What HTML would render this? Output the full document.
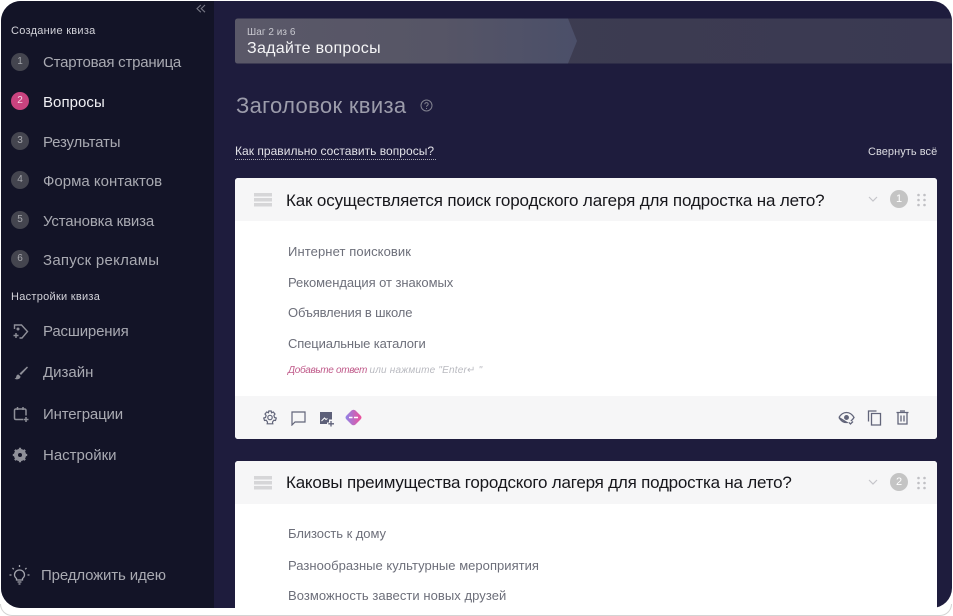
<!DOCTYPE html>
<html lang="ru"><head><meta charset="utf-8"><style>
html,body{margin:0;padding:0;width:953px;height:616px;overflow:hidden;background:#fff}
body{font-family:"Liberation Sans","DejaVu Sans",sans-serif;position:relative}
.t{position:absolute;white-space:nowrap;line-height:1}
.a{position:absolute}
.ln{position:absolute;left:0;top:604px;height:12px;border:1px solid #d4d4d4;border-top:0;box-sizing:border-box;border-radius:0 0 20px 20px;width:952px}
#f{position:absolute;left:1px;top:1px;width:951px;height:607px;background:#1e1c3d;border-radius:20px;overflow:hidden}
.sh{font-size:11px;color:#d3d3da;letter-spacing:.28px;left:11px}
.n{position:absolute;left:11px;width:18px;height:18px;border-radius:50%;background:#44454f;color:#a6a7ad;font-size:10px;line-height:18px;text-align:center}
.m{font-size:15px;color:#a9aab2;left:43px}
.card{position:absolute;left:235px;width:702px;background:#fff;border-radius:3px;overflow:hidden}
.hd{position:absolute;left:0;top:0;width:702px;height:43px;background:#f6f6f7}
.q{font-size:17px;color:#17171c;left:51px;top:14px}
.o{font-size:13px;color:#6d6f7a;left:53px}
.b{position:absolute;left:655px;top:12px;width:18px;height:18px;border-radius:50%;background:#c4c4c4;color:#fff;font-size:11px;line-height:18px;text-align:center}
</style></head><body>
<div class="ln"></div>
<div id="f"></div>
<div class="a" style="left:1px;top:1px;width:213px;height:607px;background:#131427;border-radius:20px 0 0 20px"></div>

<svg class="a" style="left:196px;top:4px" width="10" height="10" viewBox="0 0 10 10" fill="none" stroke="#777885" stroke-width="1.1"><path d="M4.8 1 1 4.6 4.8 8.2M9 1 5.200 4.600 9 8.200"/></svg>
<div class="t sh" style="top:26px">Создание квиза</div>
<div class="n" style="top:53px">1</div><div class="t m" style="top:55px;letter-spacing:-.22px">Стартовая страница</div>
<div class="n" style="top:92px;background:#c9437f;color:#f2d4e3">2</div><div class="t m" style="top:95px;color:#f0f0f4;letter-spacing:.05px">Вопросы</div>
<div class="n" style="top:132px">3</div><div class="t m" style="top:135px;letter-spacing:-.17px">Результаты</div>
<div class="n" style="top:171px">4</div><div class="t m" style="top:174px">Форма контактов</div>
<div class="n" style="top:211px">5</div><div class="t m" style="top:214px;letter-spacing:-.14px">Установка квиза</div>
<div class="n" style="top:250px">6</div><div class="t m" style="top:253px;letter-spacing:.26px">Запуск рекламы</div>
<div class="t sh" style="top:292px">Настройки квиза</div>
<svg class="a" style="left:12px;top:323px" width="18" height="18" viewBox="0 0 18 18" fill="none" stroke="#8e8f98" stroke-width="1.4"><path d="M2.500 6V2H9.500L15.500 8.500 10 15H7.500"/><path d="M4 10V15M1.500 12.500H6.500"/><circle cx="6" cy="6" r=".8"/></svg>
<div class="t m" style="top:324px;letter-spacing:-.17px">Расширения</div>
<svg class="a" style="left:13px;top:365px" width="16" height="16" viewBox="0 0 16 16" fill="#8e8f98"><path d="M14 1.500 15 2.500 8 10 6.500 8.500Z"/><path d="M5.500 9.500C3.500 9.500 3.500 11 3 12.500 2.700 13.300 2 13.500 1.500 13.500 3 15 7.500 14.500 7.500 11.500Z"/></svg>
<div class="t m" style="top:365px">Дизайн</div>
<svg class="a" style="left:13px;top:406px" width="17" height="17" viewBox="0 0 17 17" fill="none" stroke="#8e8f98" stroke-width="1.5"><path d="M10 13.500H3Q1.500 13.500 1.500 12V4.500Q1.500 3 3 3H11.500Q13 3 13 4.500V9.500"/><path d="M4.500 1V4M10 1V4M13 11V16M10.500 13.500H15.500"/></svg>
<div class="t m" style="top:407px;letter-spacing:-.17px">Интеграции</div>
<svg class="a" style="left:12px;top:447px" width="16" height="16" viewBox="0 0 16 16"><circle cx="8" cy="8" r="4.500" fill="none" stroke="#8e8f98" stroke-width="3.200"/><path d="M8 .8V15.200M.8 8H15.200M2.900 2.900 13.100 13.100M13.100 2.900 2.900 13.100" stroke="#8e8f98" stroke-width="2.200"/><circle cx="8" cy="8" r="2" fill="#131427"/></svg>
<div class="t m" style="top:448px">Настройки</div>
<svg class="a" style="left:9px;top:564px" width="21" height="22" viewBox="0 0 21 22" fill="none" stroke="#a3a4ad" stroke-width="1.300"><path d="M7.500 14.500C6 13.300 5.500 12 5.500 10.800 5.500 8 7.700 6 10.500 6S15.500 8 15.500 10.800C15.500 12 15 13.300 13.500 14.500V16H7.500Z"/><path d="M8.500 18H12.500M9.500 20H11.500M10.500 1V3M3.500 4 4.800 5.300M17.500 4 16.200 5.300M.5 11H2.500M18.500 11H20.500"/></svg>
<div class="t m" style="top:568px;left:41px;letter-spacing:-.14px">Предложить идею</div>

<svg class="a" style="left:235px;top:18px" width="718" height="46" viewBox="0 0 718 46"><defs><linearGradient id="g1" x1="0" x2="1"><stop offset="0" stop-color="#5a5868"/><stop offset=".6" stop-color="#565566"/><stop offset="1" stop-color="#4b4f69"/></linearGradient><linearGradient id="g2" x1="0" x2="1"><stop offset="0" stop-color="#3f3e50"/><stop offset="1" stop-color="#3a3952"/></linearGradient></defs><path d="M3 .5H717V45.500H3Q0 45.500 0 42.500V3.500Q0 .5 3 .5Z" fill="url(#g2)"/><path d="M3 .5H333L342 23 333 45.500H3Q0 45.500 0 42.500V3.500Q0 .5 3 .5Z" fill="url(#g1)"/></svg>
<div class="t" style="left:247px;top:28px;font-size:10px;color:#c9c9d0;letter-spacing:.05px">Шаг 2 из 6</div>
<div class="t" style="left:247px;top:41px;font-size:16px;color:#f4f4f6;letter-spacing:.3px">Задайте вопросы</div>
<div class="t" style="left:236px;top:95px;font-size:22px;color:#9c9cab;letter-spacing:.33px">Заголовок квиза</div>
<svg class="a" style="left:420px;top:99px" width="13" height="13" viewBox="0 0 13 13" fill="none" stroke="#81818f"><circle cx="6.500" cy="6.500" r="5.500"/><path d="M4.800 5.200C4.800 3 8.300 3.200 8.200 5.200 8.100 6.500 6.500 6.400 6.500 7.800M6.500 9V10"/></svg>
<div class="t" style="left:235px;top:145px;font-size:12px;color:#e2e2e8;letter-spacing:.03px;padding-bottom:2px;border-bottom:1px dotted #aaaab5;width:201px">Как правильно составить вопросы?</div>
<div class="t" style="left:868px;top:147px;font-size:11px;color:#dcdce2;letter-spacing:.05px">Свернуть всё</div>

<div class="card" style="top:178px;height:261px">
<div class="hd"></div>
<svg class="a" style="left:19px;top:15px" width="18" height="14"><path d="M0 0H18V3.500H0ZM0 5H18V8.500H0ZM0 10H18V13.500H0Z" fill="#d6d6d8"/></svg>
<div class="t q" style="letter-spacing:-.15px">Как осуществляется поиск городского лагеря для подростка на лето?</div>
<svg class="a" style="left:633px;top:18px" width="10" height="7" fill="none" stroke="#c5c5ca" stroke-width="1.200"><path d="M1 1 5 5 9 1"/></svg>
<div class="b">1</div>
<svg class="a" style="left:682px;top:15px" width="9" height="14" fill="#c0c0c4"><circle cx="1.500" cy="2" r="1.300"/><circle cx="7.500" cy="2" r="1.300"/><circle cx="1.500" cy="7" r="1.300"/><circle cx="7.500" cy="7" r="1.300"/><circle cx="1.500" cy="12" r="1.300"/><circle cx="7.500" cy="12" r="1.300"/></svg>
<div class="t o" style="top:67px;letter-spacing:.1px">Интернет поисковик</div>
<div class="t o" style="top:98px;letter-spacing:-.06px">Рекомендация от знакомых</div>
<div class="t o" style="top:128px;letter-spacing:-.17px">Объявления в школе</div>
<div class="t o" style="top:159px;letter-spacing:-.13px">Специальные каталоги</div>
<div class="t" style="left:53px;top:188px;font-size:10px;font-style:italic;color:#c05a8a;letter-spacing:-.33px">Добавьте ответ <span style="color:#b9bac0;letter-spacing:.2px">или нажмите "Enter↵ "</span></div>
<div class="a" style="left:0;top:218px;width:702px;height:43px;background:#f6f6f7"></div>
<svg class="a" style="left:28px;top:232px" width="14" height="15" viewBox="0 0 14 15" fill="none" stroke="#62657a" stroke-width="1.200"><circle cx="7" cy="7.500" r="2.200"/><path d="M5.800 1H8.200L8.600 2.800 10.300 2 12 4 10.900 5.500 11.500 7.500 13.300 8 12.500 10.500 10.800 10.300 9.500 12 9.800 13.800H4.200L4.500 12 3.200 10.300 1.500 10.500.7 8 2.500 7.500 3.100 5.500 2 4 3.700 2 5.400 2.800Z"/></svg>
<svg class="a" style="left:56px;top:233px" width="15" height="15" viewBox="0 0 15 15" fill="none" stroke="#62657a" stroke-width="1.200"><path d="M1 1H14V11H4L1 14Z"/></svg>
<svg class="a" style="left:84px;top:233px" width="16" height="16" viewBox="0 0 16 16"><path d="M1 1H13V8.500H10V11.500H8V13H1Z" fill="#5d6079"/><path d="M2.500 10 5.500 7 7 8.500 8.500 7.500" stroke="#fff" fill="none"/><path d="M12 10V15.500M9.300 12.800H15" stroke="#5d6079" stroke-width="1.300"/></svg>
<svg class="a" style="left:110px;top:231px" width="17" height="17" viewBox="0 0 17 17"><defs><linearGradient id="g3" x1="0" x2="1"><stop offset="0" stop-color="#8f84e8"/><stop offset="1" stop-color="#ee4f9a"/></linearGradient></defs><path d="M6.500 1.500Q8.500 0 10.500 1.500L15.500 6.500Q17.500 8.500 15.500 10.500L10.500 15.500Q8.500 17 6.500 15.500L1.500 10.500Q-.5 8.500 1.500 6.500Z" fill="url(#g3)"/><path d="M4 8.500H7.500M9 8.500H13" stroke="#fff" stroke-width="1.500"/></svg>
<svg class="a" style="left:603px;top:233px" width="17" height="14" viewBox="0 0 17 14" fill="none" stroke="#62657a" stroke-width="1.300"><path d="M1 6.500C3 3 6 1.500 8.500 1.500S14 3 16 6.500C15 8.200 14 9.200 12.800 10M9 11.500C5.500 11.800 3 10 1 6.500Z"/><circle cx="8.500" cy="6.500" r="1.800" fill="#62657a"/><path d="M11 11.500 12.500 13 15 10.500"/></svg>
<svg class="a" style="left:632px;top:232px" width="15" height="16" viewBox="0 0 15 16" fill="none" stroke="#62657a" stroke-width="1.300"><path d="M1.500 11.500V1H9.500"/><path d="M4.500 3.500H13.500V15H4.500Z"/></svg>
<svg class="a" style="left:661px;top:232px" width="13" height="15" viewBox="0 0 13 15" fill="none" stroke="#62657a" stroke-width="1.300"><path d="M2 3V14H11V3M.5 2.500H12.500M4 1H9M5 5.500V11.500M8 5.500V11.500"/></svg>
</div>

<div class="card" style="top:461px;height:147px;border-radius:3px 3px 0 0">
<div class="hd"></div>
<svg class="a" style="left:19px;top:15px" width="18" height="14"><path d="M0 0H18V3.500H0ZM0 5H18V8.500H0ZM0 10H18V13.500H0Z" fill="#d6d6d8"/></svg>
<div class="t q" style="top:13px;letter-spacing:-.21px">Каковы преимущества городского лагеря для подростка на лето?</div>
<svg class="a" style="left:633px;top:18px" width="10" height="7" fill="none" stroke="#c5c5ca" stroke-width="1.200"><path d="M1 1 5 5 9 1"/></svg>
<div class="b">2</div>
<svg class="a" style="left:682px;top:15px" width="9" height="14" fill="#c0c0c4"><circle cx="1.500" cy="2" r="1.300"/><circle cx="7.500" cy="2" r="1.300"/><circle cx="1.500" cy="7" r="1.300"/><circle cx="7.500" cy="7" r="1.300"/><circle cx="1.500" cy="12" r="1.300"/><circle cx="7.500" cy="12" r="1.300"/></svg>
<div class="t o" style="top:66px;letter-spacing:-.06px">Близость к дому</div>
<div class="t o" style="top:98px;letter-spacing:.03px">Разнообразные культурные мероприятия</div>
<div class="t o" style="top:128px;letter-spacing:.06px">Возможность завести новых друзей</div>
</div>
</body></html>
